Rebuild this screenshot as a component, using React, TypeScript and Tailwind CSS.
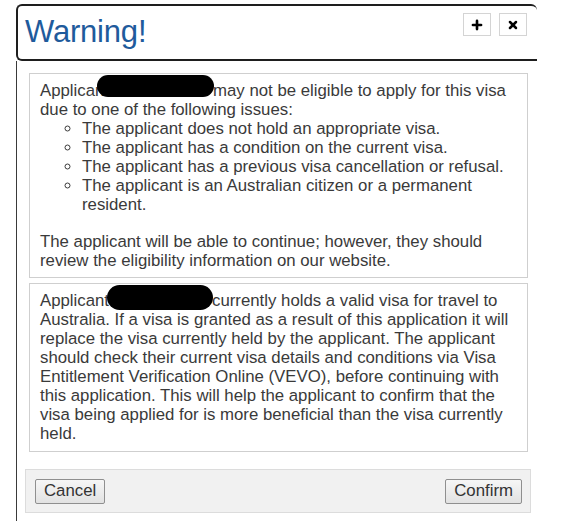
import React from 'react';
import { Plus, X } from 'lucide-react';

// black marker used to blank out the applicant's name
const Redacted: React.FC<{ className?: string }> = ({ className }) => (
  <span className={`inline-block rounded-full bg-black ${className ?? ''}`} />
);

const issues = [
  'The applicant does not hold an appropriate visa.',
  'The applicant has a condition on the current visa.',
  'The applicant has a previous visa cancellation or refusal.',
  'The applicant is an Australian citizen or a permanent resident.',
];

const App: React.FC = () => {
  return (
    <div
      className="w-[562px] h-[521px] bg-white pt-[4px] pl-[16px] overflow-hidden"
      style={{ fontFamily: '"Liberation Sans", Arial, sans-serif' }}
    >
      <div className="w-[521px] h-[517px] flex flex-col">
        {/* title bar */}
        <div className="h-[57px] shrink-0 flex items-start justify-between border-t-2 border-l-2 border-b-2 border-[#1e1e1e] rounded-tl-[6px] rounded-bl-[6px] rounded-tr-[6px] pl-[7px] pr-[10px]">
          <h1 className="text-[31px] leading-none text-[#1f5b9c] mt-[10px] tracking-[-0.2px]">Warning!</h1>
          <div className="flex gap-[8px] mt-[7px]">
            <button className="w-[28px] h-[23px] flex items-center justify-center bg-white border border-[#d4d4d4]">
              <Plus size={14} strokeWidth={4.5} className="text-black" />
            </button>
            <button className="w-[28px] h-[23px] flex items-center justify-center bg-white border border-[#d4d4d4]">
              <X size={12} strokeWidth={5} className="text-black" />
            </button>
          </div>
        </div>

        {/* body */}
        <div className="flex-1 border-l border-[#3a3a3a] pt-[12px] pl-[12px] pr-[9px] text-[16.8px] leading-[19px] text-[#3a3a3a]">
          <div className="border border-[#cfcfcf] pt-[7px] pb-[7px] pl-[10px] pr-[10px]">
            <p>
              Applicant
              <Redacted className="w-[117px] h-[22px] -ml-[12px] mr-[-1px] -mt-[6px] -mb-[1px]" />
              may not be eligible to apply for this visa due to one of the following issues:
            </p>
            <ul className="list-[circle] pl-[42px] mb-[18px]">
              {issues.map(item => (
                <li key={item}>{item}</li>
              ))}
            </ul>
            <p>
              The applicant will be able to continue; however, they should review the eligibility information on our
              website.
            </p>
          </div>

          <div className="mt-[5px] border border-[#cfcfcf] pt-[7px] pb-[8px] pl-[10px] pr-[10px]">
            <p>
              Applicant
              <Redacted className="w-[106px] h-[25px] -ml-[2px] mr-[-1px] -mt-[6px] -mb-[4px]" />
              currently holds a valid visa for travel to Australia. If a visa is granted as a result of this application
              it will replace the visa currently held by the applicant. The applicant should check their current visa
              details and conditions via Visa Entitlement Verification Online (VEVO), before continuing with this
              application. This will help the applicant to confirm that the visa being applied for is more beneficial
              than the visa currently held.
            </p>
          </div>

          {/* footer buttons */}
          <div className="mt-[17px] -ml-[4px] mr-[-3px] h-[44px] flex items-start justify-between bg-[#f1f1f1] border border-[#dcdcdc] pt-[9px] pl-[9px] pr-[8px]">
            <button className="h-[25px] px-[8px] bg-gradient-to-b from-[#f6f6f6] to-[#e2e2e2] border border-[#8f8f8f] rounded-[2px] text-[16.8px] leading-none text-[#333]">
              Cancel
            </button>
            <button className="h-[25px] px-[8px] bg-gradient-to-b from-[#f6f6f6] to-[#e2e2e2] border border-[#8f8f8f] rounded-[2px] text-[16.8px] leading-none text-[#333]">
              Confirm
            </button>
          </div>
        </div>
      </div>
    </div>
  );
};

export default App;
